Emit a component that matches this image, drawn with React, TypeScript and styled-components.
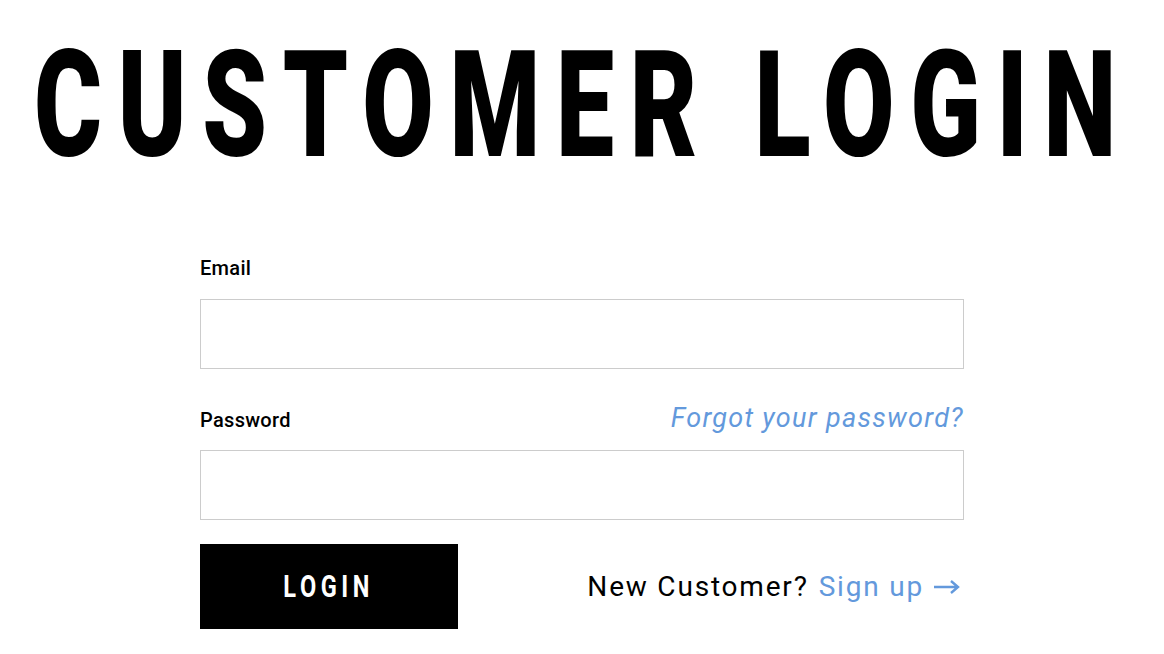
import React from "react"
import styled, { createGlobalStyle } from "styled-components"

const GlobalStyle = createGlobalStyle`
  html, body {
    margin: 0;
    padding: 0;
    background: #fff;
  }
  body {
    font-family: Roboto, "Liberation Sans", sans-serif;
    color: #000;
  }
`

const Page = styled.div`
  display: flex;
  flex-direction: column;
  align-items: center;
  padding-top: 31px;
`

const Title = styled.h1`
  margin: 0;
  font-size: 148px;
  line-height: 150px;
  font-weight: 900;
  letter-spacing: 22.4px;
  text-indent: 2px;
  white-space: nowrap;
  transform: scaleX(0.7);
  transform-origin: center;
`

const Form = styled.form`
  width: 764px;
  margin-top: 75px;
  display: flex;
  flex-direction: column;
`

const LabelRow = styled.div<{ $top?: number }>`
  display: flex;
  justify-content: space-between;
  align-items: baseline;
  margin-top: ${(p) => p.$top ?? 0}px;
`

const Label = styled.label`
  font-size: 20px;
  line-height: 24px;
  font-weight: 500;
  letter-spacing: 0.3px;
`

const Forgot = styled.a`
  font-size: 27px;
  line-height: 26px;
  font-style: italic;
  letter-spacing: 1.3px;
  color: #6399dc;
  text-decoration: none;
  cursor: pointer;
`

const Input = styled.input<{ $top: number }>`
  box-sizing: border-box;
  width: 100%;
  height: 70px;
  margin-top: ${(p) => p.$top}px;
  border: 1px solid #cccccc;
  border-radius: 0;
  padding: 0 16px;
  font-size: 20px;
  font-family: inherit;
  outline: none;
`

const Footer = styled.div`
  display: flex;
  justify-content: space-between;
  align-items: center;
  margin-top: 24px;
`

const LoginButton = styled.button`
  width: 258px;
  height: 85px;
  background: #000;
  color: #fff;
  border: none;
  border-radius: 0;
  font-family: inherit;
  font-size: 31px;
  font-weight: 700;
  letter-spacing: 6px;
  cursor: pointer;
`

const ButtonText = styled.span`
  display: inline-block;
  transform: scaleX(0.76);
`

const SignupText = styled.div`
  display: flex;
  align-items: center;
  gap: 10px;
  font-size: 28px;
  letter-spacing: 1.8px;
  padding-right: 4px;
`

const SignupLink = styled.a`
  color: #6399dc;
  text-decoration: none;
  cursor: pointer;
`

const Arrow = () => (
  <svg width="26" height="14" viewBox="0 0 26 14" fill="none">
    <path d="M0 7H24M17 1L24 7L17 13" stroke="#6399dc" strokeWidth="2.4" />
  </svg>
)

const App = () => (
  <>
    <GlobalStyle />
    <Page>
      <Title>CUSTOMER LOGIN</Title>
      <Form onSubmit={ (e) => e.preventDefault() }>
        <LabelRow>
          <Label htmlFor="email">Email</Label>
        </LabelRow>
        <Input id="email" type="email" $top={ 19 } />
        <LabelRow $top={ 36 }>
          <Label htmlFor="password">Password</Label>
          <Forgot>Forgot your password?</Forgot>
        </LabelRow>
        <Input id="password" type="password" $top={ 18 } />
        <Footer>
          <LoginButton type="submit">
            <ButtonText>LOGIN</ButtonText>
          </LoginButton>
          <SignupText>
            <span>New Customer?</span>
            <SignupLink>Sign up</SignupLink>
            <Arrow />
          </SignupText>
        </Footer>
      </Form>
    </Page>
  </>
)

export default App
